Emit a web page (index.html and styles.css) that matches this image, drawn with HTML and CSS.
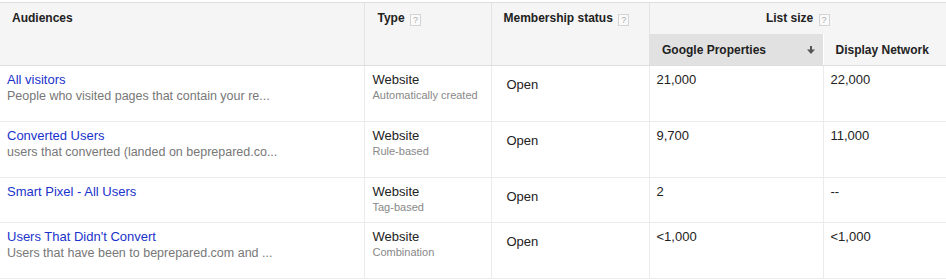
FILE: index.html
```html
<!DOCTYPE html>
<html>
<head>
    <title>Audiences</title>
    <link rel="stylesheet" href="styles.css">
</head>
<body>
    <div class="wrap">
        <table class="audiences">
            <colgroup>
                <col style="width: 364px">
                <col style="width: 127px">
                <col style="width: 158px">
                <col style="width: 174px">
                <col style="width: 123px">
            </colgroup>
            <thead>
                <tr class="head-top">
                    <th rowspan="2">Audiences</th>
                    <th rowspan="2" class="th-type">Type <span class="help">?</span></th>
                    <th rowspan="2" class="th-status">Membership status <span class="help">?</span></th>
                    <th colspan="2" class="th-size">List size <span class="help">?</span></th>
                </tr>
                <tr class="head-sub">
                    <th class="sorted">
                        <div class="sub-inner">
                            <span>Google Properties</span>
                            <svg class="arrow" width="8" height="8" viewBox="0 0 8 8">
                                <rect x="3" y="0" width="2" height="4" fill="#555"/>
                                <path d="M0 3.5 H8 L4 8 Z" fill="#555"/>
                            </svg>
                        </div>
                    </th>
                    <th class="display">Display Network</th>
                </tr>
            </thead>
            <tbody>
                <tr>
                    <td>
                        <a href="#" class="name">All visitors</a>
                        <div class="desc">People who visited pages that contain your re...</div>
                    </td>
                    <td>Website<div class="sub">Automatically created</div></td>
                    <td class="status">Open</td>
                    <td>21,000</td>
                    <td>22,000</td>
                </tr>
                <tr>
                    <td>
                        <a href="#" class="name">Converted Users</a>
                        <div class="desc">users that converted (landed on beprepared.co...</div>
                    </td>
                    <td>Website<div class="sub">Rule-based</div></td>
                    <td class="status">Open</td>
                    <td>9,700</td>
                    <td>11,000</td>
                </tr>
                <tr>
                    <td>
                        <a href="#" class="name">Smart Pixel - All Users</a>
                    </td>
                    <td>Website<div class="sub">Tag-based</div></td>
                    <td class="status">Open</td>
                    <td>2</td>
                    <td>--</td>
                </tr>
                <tr>
                    <td>
                        <a href="#" class="name">Users That Didn't Convert</a>
                        <div class="desc">Users that have been to beprepared.com and ...</div>
                    </td>
                    <td>Website<div class="sub">Combination</div></td>
                    <td class="status">Open</td>
                    <td>&lt;1,000</td>
                    <td>&lt;1,000</td>
                </tr>
            </tbody>
        </table>
    </div>
</body>
</html>
```

FILE: styles.css
```css
body {
    margin: 0;
    background: #fff;
    font-family: "Liberation Sans", Arial, sans-serif;
    font-size: 13px;
    color: #222;
}
.wrap {
    padding-top: 2px;
}
.audiences {
    width: 946px;
    table-layout: fixed;
    border-collapse: collapse;
}
.audiences th {
    background: #f5f5f5;
    text-align: left;
    vertical-align: top;
    font-size: 12px;
    font-weight: bold;
    line-height: 16px;
    padding: 7px 12px 0;
    border-top: 1px solid #ddd;
    border-left: 1px solid #e3e3e3;
    border-bottom: 1px solid #ddd;
    white-space: nowrap;
}
.audiences th:first-child {
    border-left: none;
}
.head-top th {
    height: 24px;
}
.audiences .th-type {
    padding-left: 13px;
}
.audiences .th-size {
    text-align: center;
    border-bottom: none;
}
.head-sub th {
    height: 31px;
    padding: 0 12px;
    vertical-align: middle;
    border-top: none;
}
.audiences .sorted {
    background: #e1e1e1;
    padding-left: 13px;
    padding-right: 8px;
}
.audiences .display {
    border-left: 1px solid #fff;
}
.sub-inner {
    display: flex;
    align-items: center;
    justify-content: space-between;
}
.arrow {
    display: block;
    margin-top: 1px;
}
.help {
    display: inline-block;
    width: 9px;
    height: 10px;
    border: 1px solid #d3d3d3;
    background: #fafafa;
    color: #aaa;
    font-size: 9px;
    font-weight: normal;
    line-height: 10px;
    text-align: center;
    vertical-align: -1px;
    margin-left: 2px;
}
.audiences td {
    vertical-align: top;
    line-height: 16px;
    padding: 6px 7px 8px;
    border-left: 1px solid #ebebeb;
    border-bottom: 1px solid #ebebeb;
}
.audiences td:first-child {
    border-left: none;
}
.audiences td:nth-child(2) {
    padding-left: 8px;
}
.audiences td.status {
    padding-top: 11px;
    padding-left: 15px;
}
.name {
    color: #1a33cc;
    text-decoration: none;
}
.desc {
    color: #777;
    font-size: 12.5px;
    line-height: 17px;
    margin-bottom: 8px;
    white-space: nowrap;
}
.sub {
    color: #888;
    font-size: 11px;
    line-height: 14px;
}
```
